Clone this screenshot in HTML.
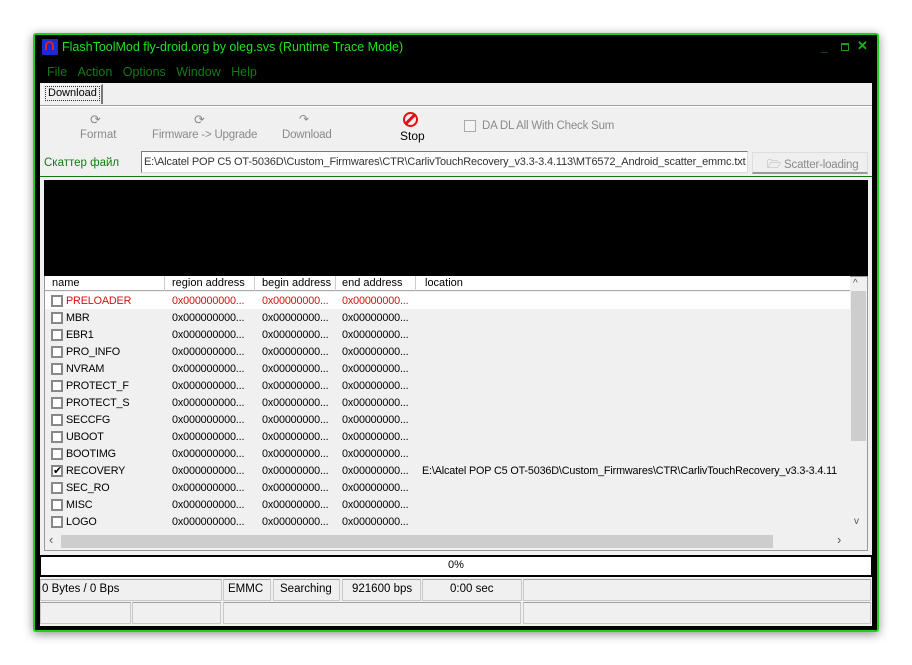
<!DOCTYPE html>
<html><head><meta charset="utf-8"><style>
*{box-sizing:border-box;margin:0;padding:0}
body{width:912px;height:665px;background:#fff;position:relative;overflow:hidden;font-family:"Liberation Sans",sans-serif;font-size:12px;color:#000}
.a{position:absolute;white-space:nowrap}
.g{color:#8a8a8a}
.cb{position:absolute;width:12px;height:12px;border:1px solid #777;background:#fff}
.row{position:absolute;left:45px;width:805px;height:17px;white-space:nowrap;overflow:hidden}
.row span{position:absolute;top:2px;font-size:10.8px;letter-spacing:-0.15px}
.hd span{position:absolute;top:1px;font-size:11px}
.sep{position:absolute;top:0;width:1px;height:15px;background:#ccc}
.sb{position:absolute;height:22px;border:1px solid #c8c8c8;border-top-color:#a0a0a0}
</style></head><body>
<div class="a" style="left:33px;top:33px;width:846px;height:599px;background:#000;border:2px solid #1fd11f;border-radius:3px;box-shadow:0 2px 10px rgba(0,0,0,.45)"></div>
<div class="a" style="left:42px;top:39px;width:16px;height:16px;background:#1a2bd0"><div style="position:absolute;left:3px;top:2px;width:9px;height:9px;border:2px solid #e02020;border-bottom:none;border-radius:6px 6px 0 0"></div></div>
<div class="a" style="left:62px;top:40px;color:#22e022;font-size:12.5px">FlashToolMod fly-droid.org by oleg.svs (Runtime Trace Mode)</div>
<div class="a" style="left:821px;top:40px;color:#1a9a1a;font-size:12px;font-weight:bold">_</div>
<div class="a" style="left:841px;top:43px;width:8px;height:8px;border:1px solid #1a9a1a;border-top-width:2px"></div>
<div class="a" style="left:857px;top:38px;color:#1fb01f;font-size:13px;font-weight:bold">✕</div>
<div class="a" style="left:47px;top:65px;color:#137a13;font-size:12.5px">File&nbsp;&nbsp;&nbsp;Action&nbsp;&nbsp;&nbsp;Options&nbsp;&nbsp;&nbsp;Window&nbsp;&nbsp;&nbsp;Help</div>
<div class="a" style="left:40px;top:83px;width:832px;height:543px;background:#f0f0f0"></div>
<div class="a" style="left:42px;top:84px;width:61px;height:20px;background:#f0f0f0;border:1px solid #fff;border-right:2px solid #777;border-bottom:none"></div>
<div class="a" style="left:45px;top:86px;width:55px;height:15px;border:1px dotted #333;padding-left:2px;font-size:11px">Download</div>
<div class="a" style="left:40px;top:105px;width:832px;height:1px;background:#a0a0a0"></div>
<div class="a" style="left:40px;top:106px;width:832px;height:1px;background:#fff"></div>
<div class="a g" style="left:90px;top:112px;font-size:13px">⟳</div>
<div class="a g" style="left:80px;top:129px;font-size:11.5px">Format</div>
<div class="a g" style="left:194px;top:112px;font-size:13px">⟳</div>
<div class="a g" style="left:152px;top:129px;font-size:11.5px;letter-spacing:-0.2px">Firmware -&gt; Upgrade</div>
<div class="a g" style="left:299px;top:112px;font-size:12px">↷</div>
<div class="a g" style="left:282px;top:129px;font-size:11.5px;letter-spacing:-0.2px">Download</div>
<div class="a" style="left:403px;top:112px;width:15px;height:15px;border:2.5px solid #e01010;border-radius:50%"><div style="position:absolute;left:4px;top:-2px;width:2.5px;height:14px;background:#e01010;transform:rotate(45deg)"></div></div>
<div class="a" style="left:400px;top:129px">Stop</div>
<div class="cb" style="left:464px;top:120px;border-color:#aaa;background:#f4f4f4"></div>
<div class="a g" style="left:482px;top:120px;font-size:11.5px;letter-spacing:-0.2px">DA DL All With Check Sum</div>
<div class="a" style="left:44px;top:157px;color:#137a13;font-size:11.5px">Скаттер файл</div>
<div class="a" style="left:141px;top:151px;width:607px;height:22px;background:#fff;border:1px solid #7a7a7a;border-right-color:#ddd;border-bottom-color:#ddd;padding:4px 2px;overflow:hidden;font-size:11px;color:#333;letter-spacing:-0.15px">E:\Alcatel POP C5 OT-5036D\Custom_Firmwares\CTR\CarlivTouchRecovery_v3.3-3.4.113\MT6572_Android_scatter_emmc.txt</div>
<div class="a g" style="left:752px;top:152px;width:116px;height:22px;border:1px solid #ddd;border-bottom:2px solid #999;background:#efefef;padding:4px 0 0 14px;font-size:11.5px;letter-spacing:-0.2px">🗁 Scatter-loading</div>
<div class="a" style="left:40px;top:176px;width:832px;height:1px;background:#137a13"></div>
<div class="a" style="left:44px;top:180px;width:824px;height:96px;background:#000"></div>
<div class="a" style="left:44px;top:276px;width:824px;height:275px;background:#f0f0f0;border:1px solid #999"></div>
<div class="a hd" style="left:45px;top:276px;width:805px;height:15px;background:#fff;border-bottom:1px solid #aaa">
<span style="left:7px">name</span><div class="sep" style="left:119px"></div>
<span style="left:127px">region address</span><div class="sep" style="left:209px"></div>
<span style="left:217px">begin address</span><div class="sep" style="left:290px"></div>
<span style="left:297px">end address</span><div class="sep" style="left:370px"></div>
<span style="left:380px">location</span></div>
<div class="a" style="left:45px;top:292px;width:805px;height:17px;background:#fff"></div>
<div id="rows"></div>
<script>
var n=["PRELOADER","MBR","EBR1","PRO_INFO","NVRAM","PROTECT_F","PROTECT_S","SECCFG","UBOOT","BOOTIMG","RECOVERY","SEC_RO","MISC","LOGO"],h="";
n.forEach(function(x,i){var t=293+i*17,c=i==0?"color:#d01010":"";
h+='<div class="row" style="top:'+t+'px;'+c+'"><div class="cb" style="left:6px;top:2px;border:2px solid #888">'+(i==10?'<span style="position:absolute;left:0;top:-3px;font-size:11px;color:#000">✔</span>':'')+'</div>'
+'<span style="left:21px">'+x+'</span><span style="left:127px">0x000000000...</span><span style="left:217px">0x00000000...</span><span style="left:297px">0x00000000...</span>'
+(i==10?'<span style="left:377px;color:#000;font-size:10.8px">E:\\Alcatel POP C5 OT-5036D\\Custom_Firmwares\\CTR\\CarlivTouchRecovery_v3.3-3.4.11</span>':'')+'</div>';});
document.getElementById("rows").innerHTML=h;
</script>
<div class="a" style="left:850px;top:277px;width:17px;height:256px;background:#f0f0f0"></div>
<div class="a" style="left:853px;top:278px;color:#555;font-size:10px">^</div>
<div class="a" style="left:851px;top:291px;width:15px;height:150px;background:#cdcdcd"></div>
<div class="a" style="left:854px;top:516px;color:#555;font-size:10px">v</div>
<div class="a" style="left:45px;top:533px;width:805px;height:17px;background:#f0f0f0"></div>
<div class="a" style="left:49px;top:532px;color:#555;font-size:13px">‹</div>
<div class="a" style="left:61px;top:535px;width:712px;height:13px;background:#cdcdcd"></div>
<div class="a" style="left:837px;top:532px;color:#555;font-size:13px">›</div>
<div class="a" style="left:40px;top:555px;width:832px;height:22px;background:#000"></div>
<div class="a" style="left:41px;top:557px;width:830px;height:18px;background:#fff;text-align:center;font-size:11px;padding-top:2px">0%</div>
<div class="sb" style="left:40px;top:579px;width:182px"></div>
<div class="a" style="left:42px;top:583px;font-size:11.5px">0 Bytes / 0 Bps</div>
<div class="sb" style="left:223px;top:579px;width:48px"></div><div class="a" style="left:228px;top:583px;font-size:11.5px">EMMC</div>
<div class="sb" style="left:273px;top:579px;width:67px"></div><div class="a" style="left:280px;top:583px;font-size:11.5px">Searching</div>
<div class="sb" style="left:342px;top:579px;width:79px"></div><div class="a" style="left:352px;top:583px;font-size:11.5px">921600 bps</div>
<div class="sb" style="left:422px;top:579px;width:100px"></div><div class="a" style="left:450px;top:583px;font-size:11.5px">0:00 sec</div>
<div class="sb" style="left:523px;top:579px;width:348px"></div>
<div class="sb" style="left:40px;top:602px;width:91px"></div>
<div class="sb" style="left:132px;top:602px;width:89px"></div>
<div class="sb" style="left:223px;top:602px;width:298px"></div>
<div class="sb" style="left:523px;top:602px;width:348px"></div>
</body></html>
